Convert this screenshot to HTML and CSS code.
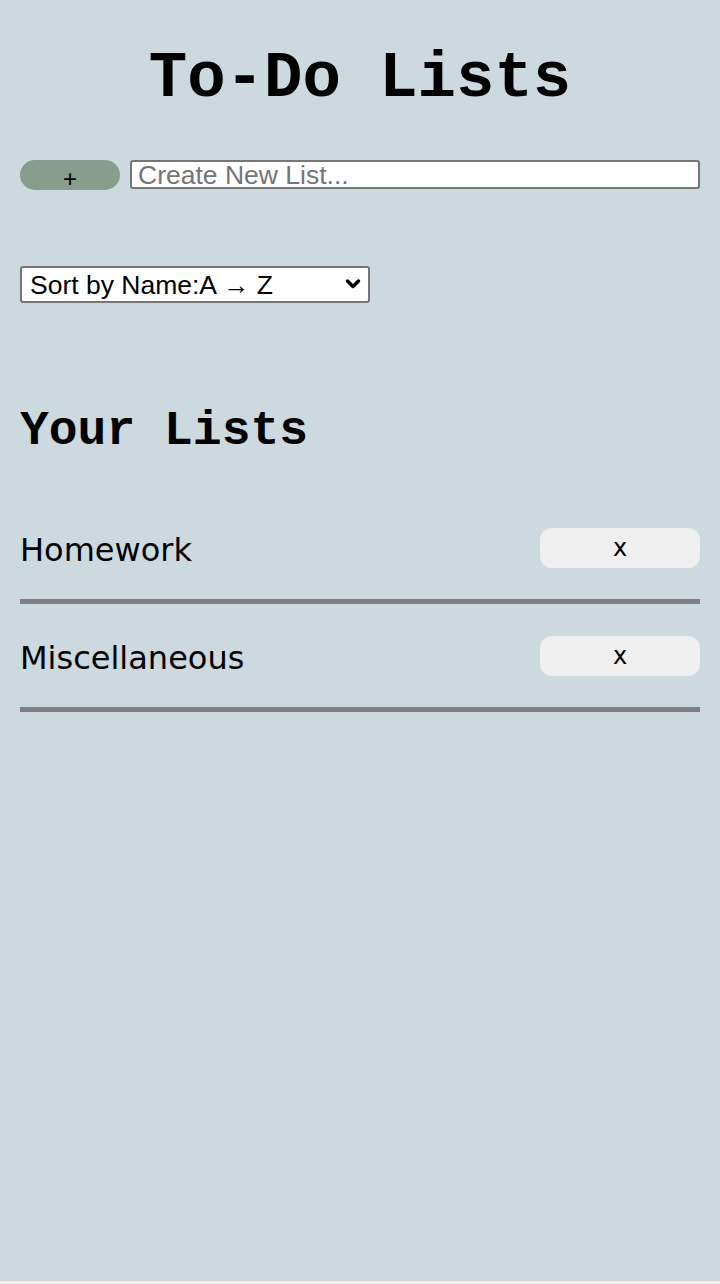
FILE: index.html
```html
<!DOCTYPE html>
<html>
<head>
<meta charset="utf-8">
<link rel="stylesheet" href="styles.css">
</head>
<body>
<div class="app">
  <h1 class="title">To-Do Lists</h1>
  <div class="create-row">
    <button class="add-btn">+</button>
    <input class="new-list" type="text" placeholder="Create New List...">
  </div>
  <div class="sort-row">
    <div class="select-wrap">
      <select class="sort-select">
        <option>Sort by Name:A → Z</option>
      </select>
      <svg class="chevron" width="16" height="12" viewBox="0 0 16 12"><path d="M2.5 3 L8 8.5 L13.5 3" fill="none" stroke="#000" stroke-width="3.5" stroke-linecap="round" stroke-linejoin="round"/></svg>
    </div>
  </div>
  <h2 class="section-title">Your Lists</h2>
  <ul class="lists">
    <li class="list-item">
      <span class="list-name">Homework</span>
      <button class="del-btn">x</button>
    </li>
    <li class="list-item">
      <span class="list-name">Miscellaneous</span>
      <button class="del-btn">x</button>
    </li>
  </ul>
</div>
</body>
</html>
```
FILE: styles.css
```css
html {
  background: #f0f0f0;
}
body {
  margin: 0;
}
.app {
  background: #ccdadf;
  height: 1281px;
  padding: 43px 20px 0;
  box-sizing: border-box;
  border-bottom: 1px solid #d4d4d4;
}
.title {
  margin: 0;
  text-align: center;
  font-family: "Liberation Mono", "Courier New", monospace;
  font-weight: bold;
  font-size: 64px;
  line-height: 72px;
  color: #000;
}
.create-row {
  display: flex;
  gap: 10px;
  margin-top: 45px;
  height: 30px;
  align-items: stretch;
}
.add-btn {
  width: 100px;
  border: none;
  border-radius: 15px;
  background: #879d8d;
  font-family: "Liberation Sans", Arial, sans-serif;
  font-size: 24px;
  line-height: 30px;
  padding: 0;
  padding-top: 4px;
  color: #000;
}
.new-list {
  flex: 1;
  height: 29px;
  box-sizing: border-box;
  border: 2px solid #767676;
  border-radius: 3px;
  font-family: "Liberation Sans", Arial, sans-serif;
  font-size: 26.5px;
  padding: 1px 6px 0;
  background: #fff;
}
.new-list::placeholder {
  color: #757575;
}
.sort-row {
  margin-top: 76px;
}
.select-wrap {
  position: relative;
  width: 350px;
}
.sort-select {
  appearance: none;
  -webkit-appearance: none;
  width: 350px;
  height: 37px;
  font-family: "Liberation Sans", Arial, sans-serif;
  font-size: 26.5px;
  border: 2px solid #767676;
  border-radius: 3px;
  background: #fff;
  color: #000;
  padding: 0 8px;
  display: block;
}
.chevron {
  position: absolute;
  right: 9px;
  top: 12px;
  pointer-events: none;
}
.section-title {
  margin: 100px 0 0;
  font-family: "Liberation Mono", "Courier New", monospace;
  font-weight: bold;
  font-size: 48px;
  line-height: 56px;
}
.lists {
  list-style: none;
  margin: 37px 0 0;
  padding: 0;
}
.list-item {
  display: flex;
  align-items: center;
  justify-content: space-between;
  height: 108px;
  border-bottom: 5px solid #808080;
  box-sizing: border-box;
}
.list-name {
  font-family: "DejaVu Sans", Verdana, sans-serif;
  font-size: 32px;
  color: #000;
  padding-top: 5px;
}
.del-btn {
  width: 160px;
  height: 40px;
  border: none;
  border-radius: 12px;
  background: #efefef;
  font-family: "DejaVu Sans", Verdana, sans-serif;
  font-size: 24px;
  color: #000;
  padding-top: 2px;
}
```
